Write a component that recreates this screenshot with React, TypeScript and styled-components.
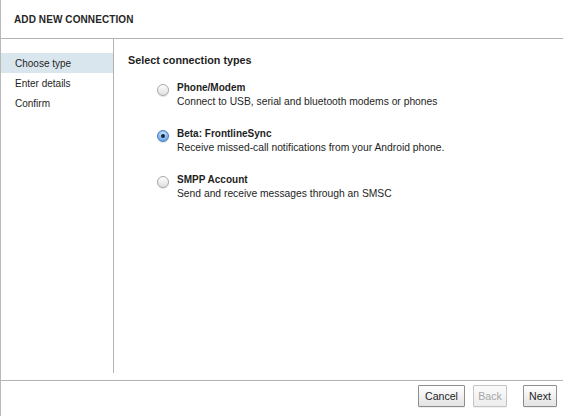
import React from "react";
import styled, { createGlobalStyle } from "styled-components";

const Global = createGlobalStyle`
  html, body { margin: 0; padding: 0; background: #fff; }
  body { font-family: "Liberation Sans", Arial, sans-serif; color: #1e1e1e; }
  * { box-sizing: border-box; }
`;

const Frame = styled.div`
  width: 563px;
  height: 416px;
  border-left: 1px solid #b9b9b9;
  display: flex;
  flex-direction: column;
  background: #fff;
`;

const Header = styled.div`
  height: 39px;
  border-bottom: 1px solid #b3b3b3;
  display: flex;
  align-items: center;
  padding-left: 13px;
  padding-top: 1px;
  font-size: 10px;
  font-weight: bold;
  color: #262626;
  letter-spacing: 0.1px;
`;

const Body = styled.div`
  display: flex;
  height: 334px;
`;

const Sidebar = styled.div`
  width: 113px;
  border-right: 1px solid #b3b3b3;
  padding-top: 14px;
  display: flex;
  flex-direction: column;
`;

const Step = styled.div<{ $active?: boolean }>`
  height: 20px;
  display: flex;
  align-items: center;
  padding-left: 14px;
  font-size: 10px;
  color: #1e1e1e;
  background: ${(p) => (p.$active ? "#dae6ee" : "transparent")};
`;

const Content = styled.div`
  flex: 1;
  padding: 14px 0 0 14px;
  display: flex;
  flex-direction: column;
`;

const Heading = styled.div`
  font-size: 10.8px;
  font-weight: bold;
  color: #1e1e1e;
  height: 14px;
  line-height: 14px;
`;

const Options = styled.div`
  display: flex;
  flex-direction: column;
  gap: 18px;
  padding: 14px 0 0 29px;
`;

const Option = styled.label`
  display: flex;
  align-items: flex-start;
  gap: 8px;
`;

const Radio = styled.span<{ $checked?: boolean }>`
  width: 12px;
  height: 12px;
  margin-top: 3px;
  border-radius: 50%;
  flex-shrink: 0;
  display: flex;
  align-items: center;
  justify-content: center;
  border: 1px solid ${(p) => (p.$checked ? "#4a7fbf" : "#a8a8a8")};
  background: ${(p) =>
    p.$checked
      ? "radial-gradient(circle at 50% 35%, #d6e9fc 0%, #86b9ee 55%, #4a8ddd 100%)"
      : "linear-gradient(#fdfdfd, #e0e0e0)"};
  box-shadow: 0 1px 1px rgba(0, 0, 0, 0.12);
  &::after {
    content: "";
    display: ${(p) => (p.$checked ? "block" : "none")};
    width: 4px;
    height: 4px;
    border-radius: 50%;
    background: #14243a;
  }
`;

const OptionText = styled.div`
  display: flex;
  flex-direction: column;
`;

const OptionTitle = styled.div`
  font-size: 10px;
  font-weight: bold;
  line-height: 14px;
  color: #1e1e1e;
`;

const OptionDesc = styled.div`
  font-size: 10.3px;
  line-height: 14px;
  color: #1e1e1e;
`;

const Footer = styled.div`
  margin-top: 7px;
  border-top: 1px solid #b3b3b3;
  flex: 1;
  display: flex;
  justify-content: flex-end;
  align-items: flex-start;
  padding: 4px 6px 0 0;
  gap: 8px;
`;

const Button = styled.button<{ $width: number; $sep?: boolean }>`
  width: ${(p) => p.$width}px;
  height: 22px;
  padding: 0;
  margin-left: ${(p) => (p.$sep ? "8px" : "0")};
  font-family: "Liberation Sans", Arial, sans-serif;
  font-size: 10.6px;
  color: ${(p) => (p.disabled ? "#a6a6a6" : "#1e1e1e")};
  border: 1px solid ${(p) => (p.disabled ? "#c4c4c4" : "#8d8d8d")};
  border-radius: 1px;
  background: ${(p) =>
    p.disabled ? "linear-gradient(#fbfbfb, #ededed)" : "linear-gradient(#ffffff, #e3e3e3)"};
  box-shadow: 0 1px 0 rgba(0, 0, 0, 0.06);
`;

const options = [
  { title: "Phone/Modem", desc: "Connect to USB, serial and bluetooth modems or phones", checked: false },
  { title: "Beta: FrontlineSync", desc: "Receive missed-call notifications from your Android phone.", checked: true },
  { title: "SMPP Account", desc: "Send and receive messages through an SMSC", checked: false },
];

export default function App() {
  return (
    <>
      <Global />
      <Frame>
        <Header>ADD NEW CONNECTION</Header>
        <Body>
          <Sidebar>
            <Step $active>Choose type</Step>
            <Step>Enter details</Step>
            <Step>Confirm</Step>
          </Sidebar>
          <Content>
            <Heading>Select connection types</Heading>
            <Options>
              {options.map((o) => (
                <Option key={o.title}>
                  <Radio $checked={o.checked} />
                  <OptionText>
                    <OptionTitle>{o.title}</OptionTitle>
                    <OptionDesc>{o.desc}</OptionDesc>
                  </OptionText>
                </Option>
              ))}
            </Options>
          </Content>
        </Body>
        <Footer>
          <Button $width={47}>Cancel</Button>
          <Button $width={34} disabled>Back</Button>
          <Button $width={34} $sep>Next</Button>
        </Footer>
      </Frame>
    </>
  );
}
